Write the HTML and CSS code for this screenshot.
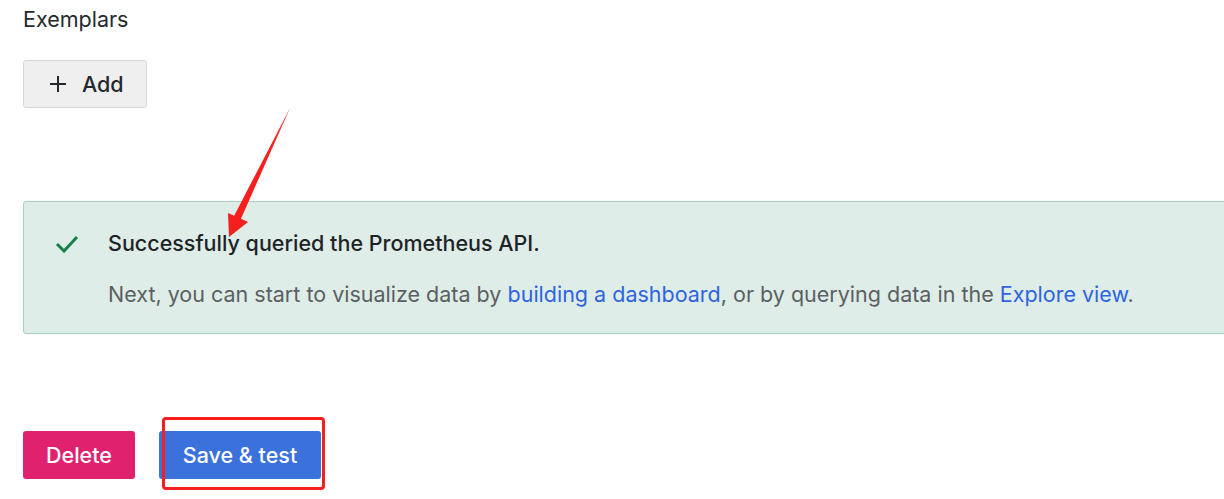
FILE: index.html
```html
<!DOCTYPE html>
<html>
<head>
<meta charset="utf-8">
<link rel="stylesheet" href="styles.css">
</head>
<body>
<div class="page">
  <div class="label">Exemplars</div>
  <button class="btn-secondary">
    <svg class="plus" width="18" height="18" viewBox="0 0 18 18"><path d="M9 1v16M1 9h16" stroke="#24292e" stroke-width="2"/></svg>
    <span>Add</span>
  </button>
  <div class="alert">
    <svg class="check" width="24" height="18" viewBox="0 0 24 18"><path d="M2 9l7 7L22 2" fill="none" stroke="#1a7f4b" stroke-width="3"/></svg>
    <div class="alert-body">
      <div class="alert-title">Successfully queried the Prometheus API.</div>
      <div class="alert-text">Next, you can start to visualize data by <a href="#">building a dashboard</a>, or by querying data in the <a href="#">Explore view</a>.</div>
    </div>
  </div>
  <div class="actions">
    <button class="btn-danger">Delete</button>
    <button class="btn-primary">Save &amp; test</button>
  </div>
</div>
<div class="highlight"></div>
<svg class="arrow" width="1224" height="499" viewBox="0 0 1224 499">
  <path d="M290 108 L237 220 L233 218 Z" fill="#f5201d"/>
  <path d="M290 108 L240 221 L236 219 Z" fill="#f5201d"/>
  <path d="M229 237 L228 213 L248 222 Z" fill="#f5201d"/>
</svg>
</body>
</html>
```
FILE: styles.css
```css
html, body { margin: 0; padding: 0; background: #fff; }
body {
  font-family: Inter, "Noto Sans", sans-serif;
  font-size: 21.5px;
  color: #24292e;
  width: 1224px;
  height: 499px;
  overflow: hidden;
  position: relative;
}
.page {
  padding: 4px 0 0 23px;
  display: flex;
  flex-direction: column;
  align-items: flex-start;
}
.label {
  line-height: 31px;
  color: #24292e;
}
button {
  font-family: inherit;
  font-size: 21.5px;
  font-weight: 500;
  border-radius: 3px;
  cursor: pointer;
  display: flex;
  align-items: center;
}
.btn-secondary {
  margin-top: 25px;
  height: 48px;
  width: 124px;
  padding: 0 0 0 25px;
  gap: 15px;
  background: #efefef;
  border: 1px solid #d6d6d6;
  color: #24292e;
}
.alert {
  margin-top: 93px;
  width: 1230px;
  height: 133px;
  box-sizing: border-box;
  background: #deede7;
  border: 1px solid #a8d1c1;
  border-radius: 3px;
  display: flex;
  align-items: flex-start;
  padding: 27px 0 0 31px;
}
.check { margin-top: 6px; flex: none; }
.alert-body { margin-left: 29px; }
.alert-title {
  font-weight: 500;
  line-height: 28px;
  color: #1f2328;
}
.alert-text {
  margin-top: 23px;
  line-height: 28px;
  color: #5c5f63;
}
.alert-text a { color: #2f63e0; text-decoration: none; }
.actions {
  margin-top: 97px;
  display: flex;
  gap: 24px;
}
.btn-danger {
  height: 48px;
  width: 112px;
  justify-content: center;
  background: #e0216e;
  border: none;
  color: #fff;
}
.btn-primary {
  height: 48px;
  width: 162px;
  justify-content: center;
  background: #3a71da;
  border: none;
  color: #fff;
}
.highlight {
  position: absolute;
  left: 162px;
  top: 417px;
  width: 157px;
  height: 67px;
  border: 3.5px solid #f5201d;
  border-radius: 4px;
}
.arrow { position: absolute; left: 0; top: 0; pointer-events: none; }
```
